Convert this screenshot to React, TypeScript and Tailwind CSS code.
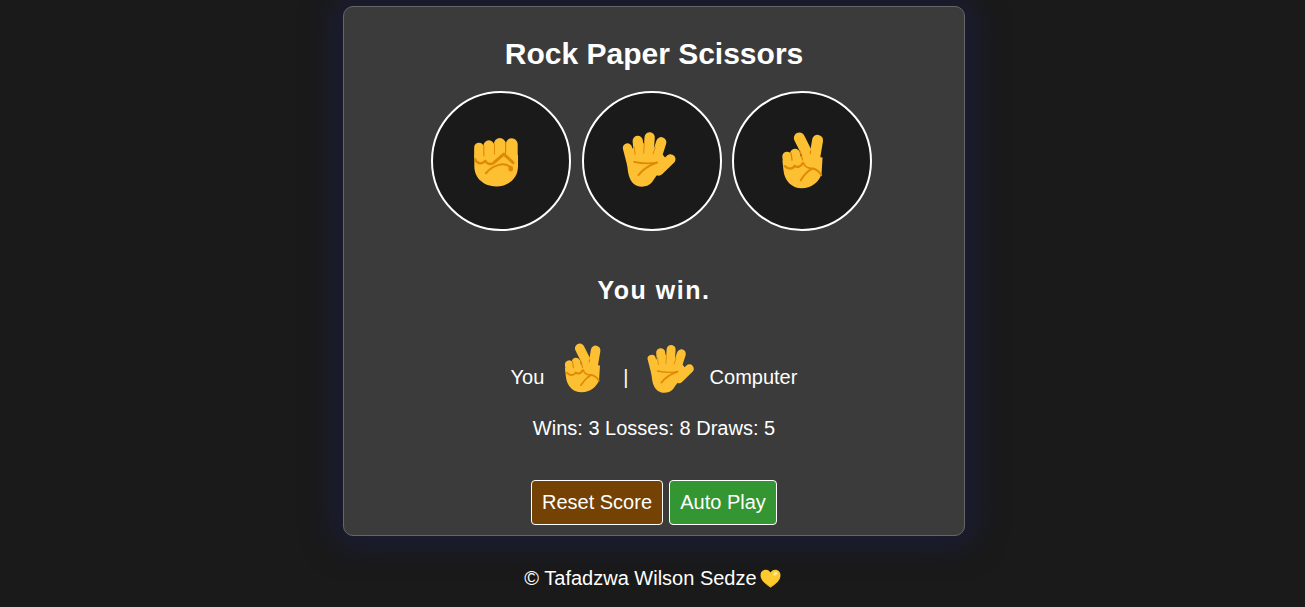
import React from "react";

const DARK = "#df8a05";
const SKIN = "#fec033";

const Fist = ({ className }: { className: string }) => (
  <svg viewBox="155 168 145 156" className={className}>
    <g fill="none" stroke={SKIN} strokeLinecap="round">
      <path strokeWidth="29" d="M176 202v26" />
      <path strokeWidth="33" d="M206 197v30" />
      <path strokeWidth="35" d="M239 191v36" />
      <path strokeWidth="36" d="M275 192v36" />
    </g>
    <path fill={SKIN} d="M162 225h132v34c0 36-29 61-66 61s-66-25-66-61z" />
    <g fill="none" stroke={DARK} strokeLinecap="round" strokeLinejoin="round">
      <path strokeWidth="7" d="M165 238c4 14 22 16 30 4 6 12 22 14 30 2" />
      <path strokeWidth="3" d="M191 198v30M223 192v30M257 186v26" />
      <path strokeWidth="9" d="M225 245l26-23 28 26" />
      <path strokeWidth="6" d="M197 280c12-14 28-24 48-27 10-1 20 3 27 10" />
      <path strokeWidth="14" d="M272 264v4" />
    </g>
  </svg>
);

const Palm = ({ className }: { className: string }) => (
  <svg viewBox="30 25 165 172" className={className}>
    <g fill="none" stroke={SKIN} strokeLinecap="round">
      <path strokeWidth="28" d="M46 76l13 50" />
      <path strokeWidth="31" d="M77 55l5 55" />
      <path strokeWidth="31" d="M113 44l-5 66" />
      <path strokeWidth="31" d="M148 59l-18 56" />
      <path strokeWidth="30" d="M176 110l-36 35" />
    </g>
    <path fill={SKIN} d="M46 100l14-22 8-2 24-14 8 0 26 12 8 6 20 18 20 25-30 25c-10 10-16 20-24 32-8 10-20 13-30 13-38 0-47-40-44-93z" />
    <g fill="none" stroke={DARK} strokeLinecap="round">
      <path strokeWidth="3" d="M66 72l3 24M97 58l-2 34M130 74l-7 20" />
      <path strokeWidth="5" d="M66 118c22 5 46 6 69 2" />
      <path strokeWidth="6" d="M135 120c-22 8-42 20-56 38" />
    </g>
  </svg>
);

const Victory = ({ className }: { className: string }) => (
  <svg viewBox="390 150 135 178" className={className}>
    <g fill="none" stroke={SKIN} strokeLinecap="round">
      <path strokeWidth="33" d="M448 171l30 60" />
      <path strokeWidth="33" d="M503 178l-10 60" />
      <path strokeWidth="29" d="M411 227l4 30" />
      <path strokeWidth="31" d="M435 219l4 30" />
    </g>
    <path fill={SKIN} d="M397 240l62-15 22 0 37 5-3 50c-8 26-32 43-60 43-30 0-52-22-55-55z" />
    <g fill="none" stroke={DARK} strokeLinecap="round" strokeLinejoin="round">
      <path strokeWidth="7" d="M404 256c10 10 24 10 30-1 8 6 18 4 24-8" />
      <path strokeWidth="4" d="M423 216l3 22M450 212l8 26M482 210l-1 8" />
      <path strokeWidth="6" d="M452 299c10-16 20-28 36-36 10 2 20 10 26 20" />
      <path strokeWidth="5" d="M461 247c2 10 14 16 27 16" />
    </g>
  </svg>
);

const Heart = () => (
  <svg viewBox="0 0 22 20" className="w-[21px] h-[19px] shrink-0">
    <path
      fill="#fecb2e"
      d="M11 19.500C6 16 .5 12 .5 6.500.5 3 3 .8 6 .8c2.300 0 4 1.200 5 3 1-1.800 2.700-3 5-3 3 0 5.500 2.200 5.500 5.700C21.500 12 16 16 11 19.500z"
    />
    <path fill="#efb31a" d="M11 19.500C16 16 21.500 12 21.500 6.500c0 5-6 9-10.500 11.500-4.500-2.500-10.500-6.500-10.500-11.500C.5 12 6 16 11 19.500z" />
    <ellipse cx="16" cy="5" rx="2.400" ry="1.600" fill="#fdeb98" transform="rotate(-35 16 5)" />
  </svg>
);

const Choice = ({ children }: { children: React.ReactNode }) => (
  <button className="w-[140px] h-[140px] rounded-full border-2 border-white bg-[#1a1a1a] flex items-center justify-center">
    {children}
  </button>
);

export default function App() {
  return (
    <div
      className="min-h-[607px] bg-[#1a1a1a] text-white flex flex-col items-center pt-[6px]"
      style={{ fontFamily: '"Liberation Sans", Arial, sans-serif' }}
    >
      <div className="w-[622px] h-[530px] ml-[3px] flex flex-col items-center rounded-[10px] border border-[#666666] bg-[#3b3b3b] shadow-[0_0_30px_10px_rgba(25,30,65,0.7)] pt-[30px]">
        <h1 className="text-[30px] leading-[34px] font-bold">Rock Paper Scissors</h1>
        <div className="flex gap-[10.5px] mt-[20px] mr-[5px]">
          <Choice>
            <Fist className="w-[48px] h-[52px] mr-[10px] mt-[2px]" />
          </Choice>
          <Choice>
            <Palm className="w-[55px] h-[57px] mr-[5px] mb-[4px]" />
          </Choice>
          <Choice>
            <Victory className="w-[45px] h-[59px] mb-[2px]" />
          </Choice>
        </div>
        <p className="mt-[44px] text-[25px] leading-[30px] font-bold tracking-[1.5px]">You win.</p>
        <div className="flex items-end mt-[37px] h-[52px] text-[20px]">
          <span className="mb-[2px]">You</span>
          <Victory className="w-[39px] h-[52px] ml-[19px] mr-[21px]" />
          <span className="mb-[2px]">|</span>
          <Palm className="w-[48px] h-[50px] ml-[18px] mr-[15px]" />
          <span className="mb-[2px]">Computer</span>
        </div>
        <p className="mt-[22px] text-[20px] leading-[24px]">Wins: 3 Losses: 8 Draws: 5</p>
        <div className="flex gap-[6px] mt-[40px]">
          <button className="w-[132px] h-[45px] rounded-[4px] border border-white bg-[#744204] text-[20px] pb-[2px]">
            Reset Score
          </button>
          <button className="w-[108px] h-[45px] rounded-[4px] border border-white bg-[#339633] text-[20px] pb-[2px]">
            Auto Play
          </button>
        </div>
      </div>
      <footer className="mt-[30px] flex items-center text-[20px] leading-[24px]">
        <span>© Tafadzwa Wilson Sedze</span>
        <span className="ml-[3px]">
          <Heart />
        </span>
      </footer>
    </div>
  );
}
